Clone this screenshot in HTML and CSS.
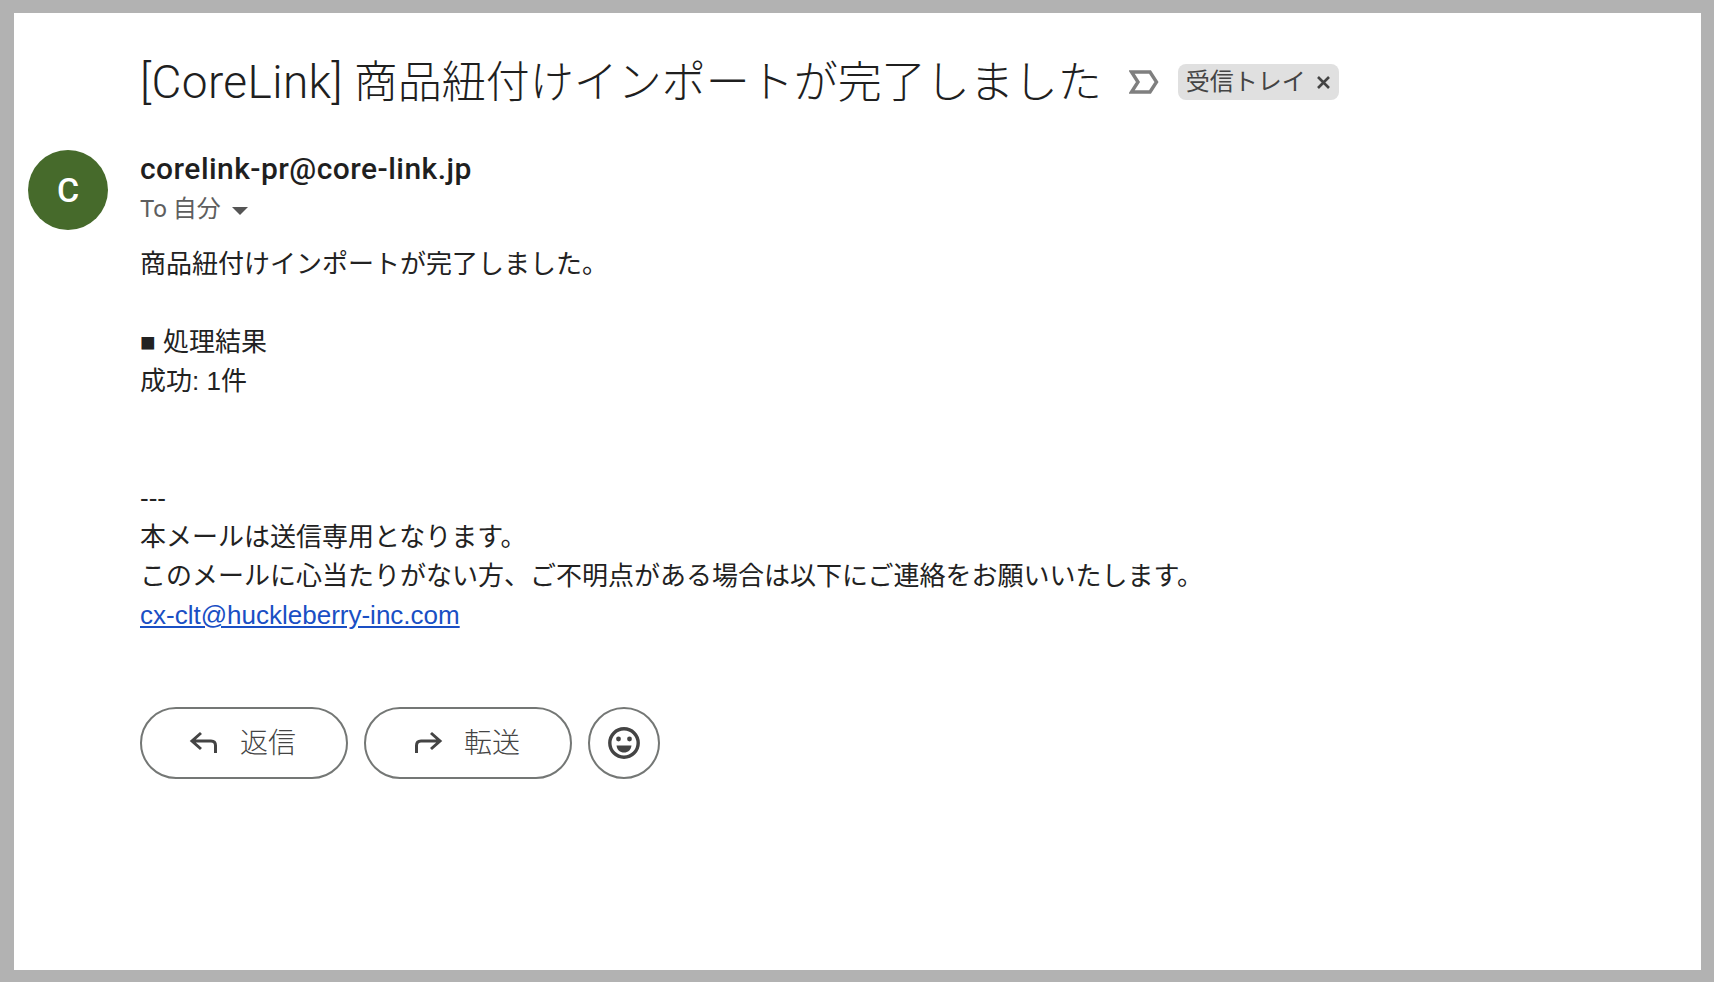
FILE: index.html
```html
<!DOCTYPE html>
<html lang="ja">
<head>
    <meta charset="UTF-8">
    <title>[CoreLink] 商品紐付けインポートが完了しました</title>
    <link rel="stylesheet" href="styles.css">
</head>
<body>
    <div class="mail">
        <div class="subject">
            <h1><span class="tag">[CoreLink]</span> 商品紐付けインポートが完了しました</h1>
            <svg class="marker" width="30" height="24" viewBox="0 0 30 24"><path d="M2.5 2H21L27.5 12L21 22H2.5L9 12Z" fill="none" stroke="#7f7f7f" stroke-width="3.4"/></svg>
            <span class="label">受信トレイ<svg class="label-x" width="13" height="13" viewBox="0 0 13 13"><path d="M1 1L12 12M12 1L1 12" fill="none" stroke="#444" stroke-width="2.6"/></svg></span>
        </div>
        <div class="message">
            <div class="avatar">C</div>
            <div class="content">
                <div class="sender">corelink-pr@core-link.jp</div>
                <div class="to">To 自分 <span class="caret"></span></div>
                <div class="body">
                    <p>商品紐付けインポートが完了しました。</p>
                    <p class="blank">&nbsp;</p>
                    <p>■ 処理結果</p>
                    <p>成功: 1件</p>
                    <p class="blank">&nbsp;</p>
                    <p class="blank">&nbsp;</p>
                    <p>---</p>
                    <p>本メールは送信専用となります。</p>
                    <p>このメールに心当たりがない方、ご不明点がある場合は以下にご連絡をお願いいたします。</p>
                    <p><a href="#">cx-clt@huckleberry-inc.com</a></p>
                </div>
                <div class="actions">
                    <button class="pill">
                        <svg width="36" height="36" viewBox="0 0 36 36"><path d="M15 8L6 16L15 24M6.5 16H25C28 16 29.5 18 29.5 20.5V28" fill="none" stroke="#444" stroke-width="3"/></svg>
                        <span class="pill-text">返信</span>
                    </button>
                    <button class="pill">
                        <svg width="36" height="36" viewBox="0 0 36 36"><path d="M21 8L30 16L21 24M29.5 16H11C8 16 6.5 18 6.5 20.5V28" fill="none" stroke="#444" stroke-width="3"/></svg>
                        <span class="pill-text">転送</span>
                    </button>
                    <button class="round">
                        <svg width="36" height="36" viewBox="0 0 36 36">
                            <circle cx="18" cy="18" r="14.2" fill="none" stroke="#444" stroke-width="3.4"/>
                            <circle cx="12.5" cy="14" r="2.4" fill="#444"/>
                            <circle cx="23.5" cy="14" r="2.4" fill="#444"/>
                            <path d="M10.5 20.5H25.5C25 25 22 27.5 18 27.5C14 27.5 11 25 10.5 20.5Z" fill="#444"/>
                        </svg>
                    </button>
                </div>
            </div>
        </div>
    </div>
</body>
</html>
```

FILE: styles.css
```css
html, body { margin: 0; height: 100%; }
body { background: #b2b2b2; padding: 13px 13px 12px 14px; box-sizing: border-box; font-family: 'Liberation Sans', 'Noto Sans CJK JP', sans-serif; color: #222; }
.mail { background: #fff; height: 100%; box-sizing: border-box; padding: 37px 0 0 14px; }

.subject { display: flex; align-items: center; margin-left: 112px; height: 64px; }
h1 { margin: 0; font-family: 'Roboto', 'Noto Sans CJK JP', sans-serif; font-size: 44px; font-weight: 300; line-height: 64px; color: #1f1f1f; white-space: nowrap; }
.tag { font-size: 46px; letter-spacing: 0.4px; }
.marker { margin-left: 27px; }
.label { margin-left: 19px; display: flex; align-items: center; gap: 11px; height: 36px; box-sizing: border-box; padding: 0 9px 5px 8px; background: #e0e0e0; border-radius: 8px; font-size: 24px; font-family: 'Roboto', 'Noto Sans CJK JP', sans-serif; font-weight: 400; color: #444; white-space: nowrap; }
.label-x { margin-top: 6px; }

.message { display: flex; margin-top: 30px; }
.avatar { width: 80px; height: 80px; border-radius: 50%; background: #466a2b; color: #fff; font-family: 'Roboto', sans-serif; font-weight: 500; font-size: 34px; display: flex; align-items: center; justify-content: center; flex-shrink: 0; margin-top: 6px; }
.content { margin-left: 32px; }
.sender { font-family: 'Roboto', sans-serif; font-weight: 500; font-size: 30px; letter-spacing: 0.45px; line-height: 43px; color: #1f1f1f; margin-top: 3px; }
.to { font-family: 'Roboto', 'Noto Sans CJK JP', sans-serif; font-size: 24px; line-height: 38px; color: #5e5e5e; display: flex; align-items: center; gap: 7px; }
.caret { width: 0; height: 0; border-left: 8px solid transparent; border-right: 8px solid transparent; border-top: 8px solid #555; margin-left: 4px; margin-top: 3px; }

.body { margin-top: 17px; font-size: 26px; line-height: 39px; color: #222; }
.body p { margin: 0; white-space: nowrap; }
.body a { color: #1a4fc4; }

.actions { display: flex; gap: 16px; margin-top: 72px; }
.pill { display: flex; align-items: center; justify-content: center; gap: 18px; width: 208px; height: 72px; padding: 0 6px 0 0; background: #fff; border: 2px solid #747775; border-radius: 36px; font-family: 'Roboto', 'Noto Sans CJK JP', sans-serif; font-size: 28px; font-weight: 300; color: #444; }
.pill-text { padding-bottom: 4px; }
.round { display: flex; align-items: center; justify-content: center; width: 72px; height: 72px; padding: 0; background: #fff; border: 2px solid #747775; border-radius: 50%; }
```
